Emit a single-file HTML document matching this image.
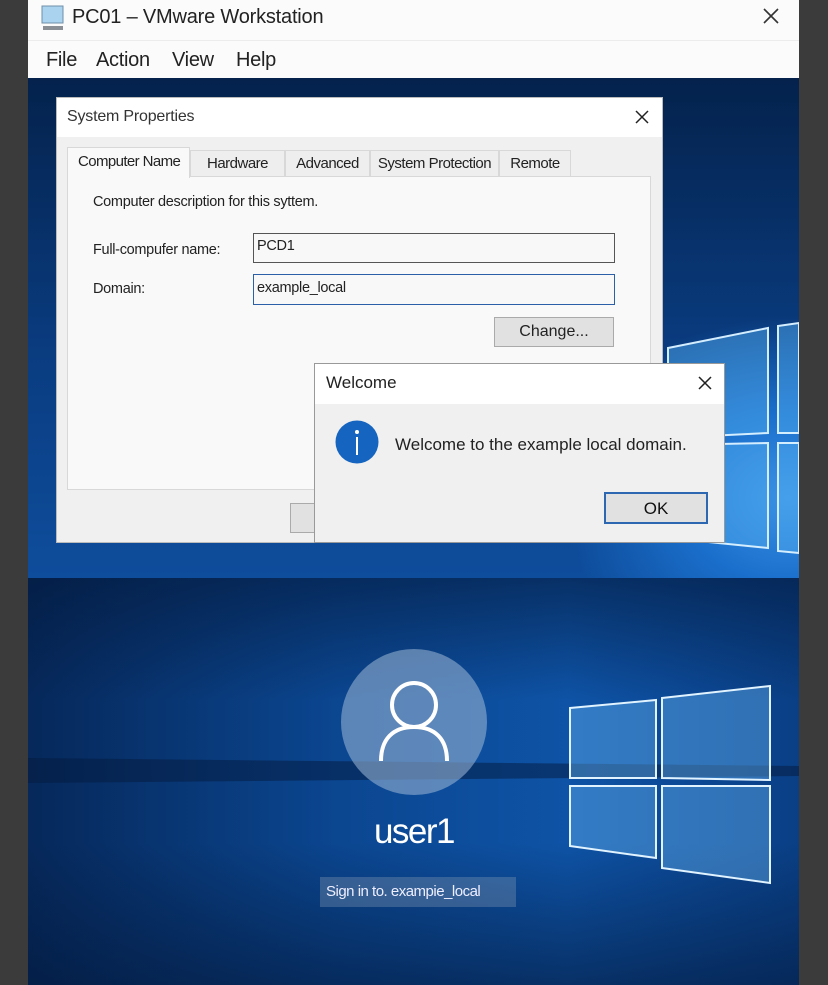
<!DOCTYPE html>
<html><head><meta charset="utf-8"><style>
*{margin:0;padding:0;box-sizing:border-box}
body{width:828px;height:985px;overflow:hidden;background:#3b3b3b;font-family:"Liberation Sans",sans-serif;position:relative}
.abs{position:absolute;white-space:nowrap}
.t{font-size:14.5px;letter-spacing:-0.3px;color:#222}
.m{position:absolute;top:49px;font-size:20px;color:#222;letter-spacing:-0.3px}
.tab{position:absolute;top:150px;height:27px;border:1px solid #d8d8d8;background:#eee;font-size:15px;letter-spacing:-0.5px;color:#222;text-align:center;padding-top:4px;white-space:nowrap}
</style></head><body>
<div class="abs" style="left:28px;top:0;width:771px;height:78px;background:#fbfbfb"></div>
<div class="abs" style="left:28px;top:40px;width:771px;height:1px;background:#ececec"></div>
<svg class="abs" style="left:40px;top:5px" width="26" height="26"><rect x="2" y="1" width="21" height="17" fill="#a9d3ef" stroke="#6f8fa8"/><rect x="3" y="21" width="20" height="4" fill="#8a8f95"/></svg>
<div class="abs" style="left:72px;top:6px;font-size:20px;letter-spacing:-0.2px;color:#222">PC01 – VMware Workstation</div>
<svg class="abs" style="left:763px;top:8px" width="16" height="16"><path d="M1 1L15 15M15 1L1 15" stroke="#333" stroke-width="1.6"/></svg>
<div class="m" style="left:46px">File</div><div class="m" style="left:96px">Action</div><div class="m" style="left:172px">View</div><div class="m" style="left:236px">Help</div>
<!-- desktop -->
<div class="abs" style="left:28px;top:78px;width:771px;height:500px;background:radial-gradient(ellipse 300px 240px at 760px 420px,#3b93e4 0%,#1a6fcc 35%,rgba(10,64,135,0) 75%),linear-gradient(180deg,#04224c 0%,#0a3c80 55%,#0e4d9c 100%)"></div>
<div class="abs" style="left:28px;top:578px;width:771px;height:407px;background:radial-gradient(ellipse 330px 230px at 690px 760px,#4aa3ee 0%,#1f78d4 30%,rgba(14,80,160,0) 75%),linear-gradient(90deg,#06285a 0%,#0b4690 40%,#0e53a6 70%,#0a3f85 100%)"></div>
<div class="abs" style="left:28px;top:578px;width:771px;height:407px;background:linear-gradient(180deg,rgba(3,25,60,0.6) 0%,rgba(3,25,60,0) 30%,rgba(3,25,60,0) 65%,rgba(3,25,60,0.6) 100%)"></div>
<svg class="abs" style="left:28px;top:78px" width="771" height="907">
<g fill="#55b0f2" fill-opacity="0.45" stroke="#d5eeff" stroke-width="2">
<polygon points="640,270 740,250 740,355 640,360"/>
<polygon points="750,248 771,245 771,355 750,355"/>
<polygon points="640,367 740,365 740,470 640,460"/>
<polygon points="750,365 771,365 771,475 750,473"/>
</g>
<polygon points="0,680 771,688 771,698 0,705" fill="#031a3e" opacity="0.5"/>
<g fill="#6bbaf4" fill-opacity="0.4" stroke="#e0f3ff" stroke-width="2">
<polygon points="542,630 628,622 628,700 542,700"/>
<polygon points="634,620 742,608 742,702 634,700"/>
<polygon points="542,708 628,708 628,780 542,768"/>
<polygon points="634,708 742,708 742,805 634,790"/>
</g>
</svg>
<!-- login -->
<div class="abs" style="left:341px;top:649px;width:146px;height:146px;border-radius:50%;background:rgba(160,185,215,0.55)"></div>
<svg class="abs" style="left:341px;top:649px" width="146" height="146"><g fill="none" stroke="#fff" stroke-width="4"><circle cx="73" cy="56" r="22"/><path d="M40 112 C40 90 52 78 73 78 C94 78 106 90 106 112"/></g></svg>
<div class="abs" style="left:0;width:828px;top:812px;text-align:center;font-size:35px;color:#fff;letter-spacing:-1.5px">user1</div>
<div class="abs" style="left:320px;top:877px;width:196px;height:30px;background:rgba(120,145,175,0.4);color:#eef;font-size:15px;letter-spacing:-0.5px;padding:6px 6px">Sign in to. exampie_local</div>
<!-- system properties -->
<div class="abs" style="left:56px;top:97px;width:607px;height:446px;background:#f0f0f0;border:1px solid #bbb"></div>
<div class="abs" style="left:57px;top:98px;width:605px;height:39px;background:#fff"></div>
<div class="abs" style="left:67px;top:108px;font-size:16px;letter-spacing:-0.2px;color:#333">System Properties</div>
<svg class="abs" style="left:635px;top:110px" width="14" height="14"><path d="M1 1L13 13M13 1L1 13" stroke="#222" stroke-width="1.5"/></svg>
<div class="abs" style="left:67px;top:176px;width:584px;height:314px;background:#f9f9f9;border:1px solid #d8d8d8"></div>
<div class="tab" style="left:190px;width:95px">Hardware</div>
<div class="tab" style="left:285px;width:85px">Advanced</div>
<div class="tab" style="left:370px;width:129px">System Protection</div>
<div class="tab" style="left:499px;width:72px">Remote</div>
<div class="abs" style="left:67px;top:147px;width:123px;height:31px;background:#f9f9f9;border:1px solid #d8d8d8;border-bottom:none;font-size:15px;letter-spacing:-0.6px;padding:5px 0 0 10px;color:#222">Computer Name</div>
<div class="abs t" style="left:93px;top:194px">Computer description for this syttem.</div>
<div class="abs t" style="left:93px;top:242px">Full-compufer name:</div>
<div class="abs t" style="left:93px;top:281px">Domain:</div>
<div class="abs t" style="left:253px;top:233px;width:362px;height:30px;border:1px solid #555;background:#f8f8f8;padding:4px 3px">PCD1</div>
<div class="abs t" style="left:253px;top:274px;width:362px;height:31px;border:1px solid #2b5fa8;background:#f8f8f8;padding:5px 3px">example_local</div>
<div class="abs" style="left:494px;top:317px;width:120px;height:30px;border:1px solid #aaa;background:#e1e1e1;font-size:16px;text-align:center;padding-top:5px;color:#222">Change...</div>
<div class="abs" style="left:290px;top:503px;width:30px;height:30px;border:1px solid #aaa;background:#e1e1e1"></div>
<!-- welcome -->
<div class="abs" style="left:314px;top:363px;width:411px;height:180px;background:#f0f0f0;border:1px solid #999"></div>
<div class="abs" style="left:315px;top:364px;width:409px;height:40px;background:#fff"></div>
<div class="abs" style="left:326px;top:373px;font-size:17px;color:#222">Welcome</div>
<svg class="abs" style="left:698px;top:376px" width="14" height="14"><path d="M1 1L13 13M13 1L1 13" stroke="#222" stroke-width="1.5"/></svg>
<svg class="abs" style="left:335px;top:420px" width="44" height="44"><circle cx="22" cy="22" r="21.5" fill="#1565c0"/><circle cx="22" cy="12" r="2" fill="#fff"/><rect x="21" y="17" width="2" height="18" fill="#fff"/></svg>
<div class="abs" style="left:395px;top:435px;font-size:17px;color:#222">Welcome to the example local domain.</div>
<div class="abs" style="left:604px;top:492px;width:104px;height:32px;border:2px solid #2e67b1;background:#e1e1e1;font-size:17px;text-align:center;padding-top:5px;color:#111">OK</div>
</body></html>
